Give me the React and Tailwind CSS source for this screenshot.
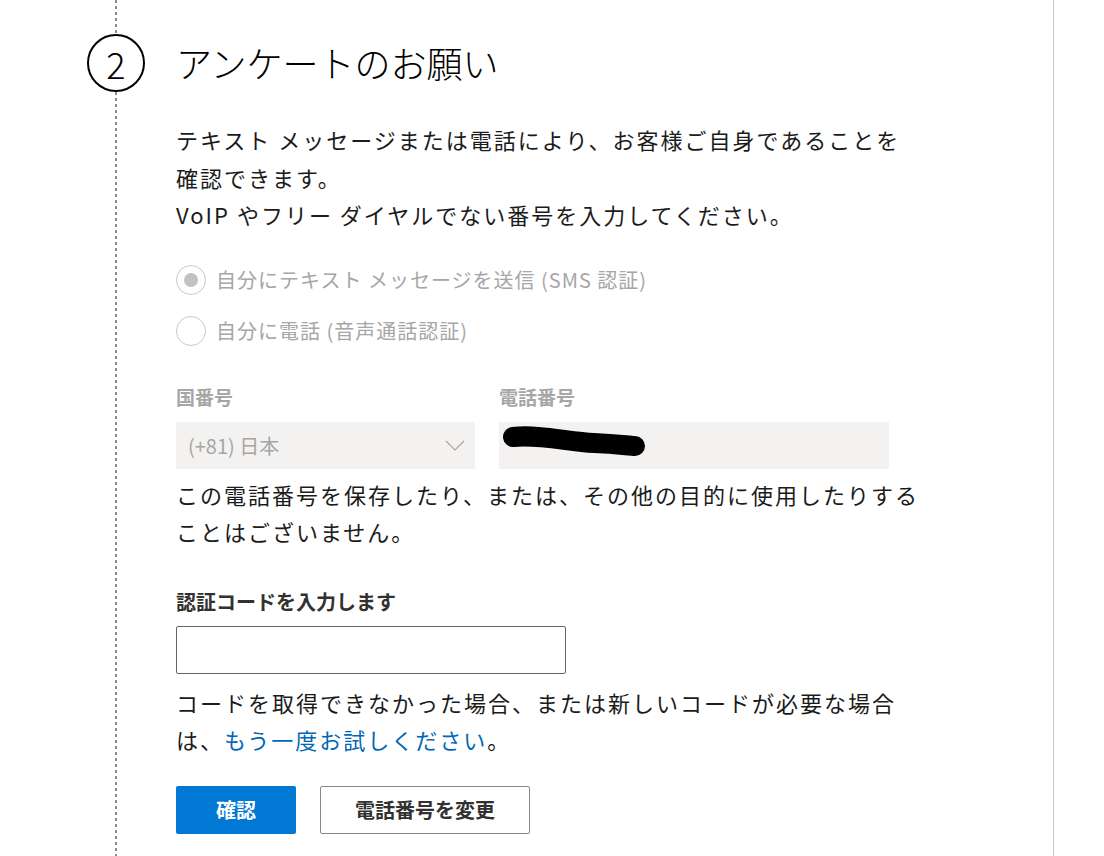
import React from 'react';

const jp = { fontFamily: '"Noto Sans CJK JP", "Noto Sans", sans-serif' };

function Radio({ checked, label }) {
  return (
    <div className="flex items-center gap-[10px] h-[34px]">
      <span className="w-[30px] h-[30px] rounded-full border border-[#c8c8c8] flex items-center justify-center">
        {checked && <span className="w-[14px] h-[14px] rounded-full bg-[#c2c2c2]" />}
      </span>
      <span className="text-[20px] text-[#a6a6a6] tracking-[1px]">{label}</span>
    </div>
  );
}

export default function App() {
  return (
    <div className="w-[1104px] h-[856px] overflow-hidden bg-white flex" style={jp}>
      <div className="w-[1054px] h-full border-r border-[#c8c8c8] flex">
        {/* ligne pointillée + numéro */}
        <div className="ml-[87px] w-[58px] flex flex-col items-center">
          <div className="w-[2px] h-[34px] bg-[repeating-linear-gradient(to_bottom,#8c8c8c_0_3px,transparent_3px_6px)]" />
          <div className="w-[58px] h-[58px] rounded-full border-2 border-black flex items-center justify-center text-[36px] font-light text-black leading-none">
            2
          </div>
          <div className="w-[2px] flex-1 bg-[repeating-linear-gradient(to_bottom,#8c8c8c_0_3px,transparent_3px_6px)]" />
        </div>

        <div className="ml-[31px] pt-[35px] text-[#1b1b1b]">
          <h1 className="text-[36px] leading-[54px] font-light text-black">アンケートのお願い</h1>

          <div className="mt-[31px] text-[22px] tracking-[2px] leading-[38px]">
            <p>テキスト メッセージまたは電話により、お客様ご自身であることを</p>
            <p>確認できます。</p>
            <p className="leading-[36px]">VoIP やフリー ダイヤルでない番号を入力してください。</p>
          </div>

          <div className="mt-[31px] flex flex-col gap-[17px]">
            <Radio checked label="自分にテキスト メッセージを送信 (SMS 認証)" />
            <Radio label="自分に電話 (音声通話認証)" />
          </div>

          <div className="mt-[35px] flex gap-[24px]">
            <div className="w-[299px]">
              <div className="text-[19px] font-bold text-[#a6a6a6] leading-[28px]">国番号</div>
              <div className="mt-[11px] h-[47px] bg-[#f3f2f1] flex items-center justify-between pl-[12px] pr-[10px]">
                <span className="text-[20px] text-[#a6a6a6]">(+81) 日本</span>
                <svg width="20" height="12" viewBox="0 0 20 12" fill="none" stroke="#a6a6a6" strokeWidth="1.2">
                  <path d="M1 1l9 9 9-9" />
                </svg>
              </div>
            </div>
            <div className="w-[390px]">
              <div className="text-[19px] font-bold text-[#a6a6a6] leading-[28px]">電話番号</div>
              <div className="mt-[11px] h-[47px] bg-[#f3f2f1] relative">
                <svg className="absolute left-0 top-0" width="160" height="47" viewBox="0 0 160 47">
                  <path d="M14 15 C 40 12, 70 20, 95 21 S 130 24, 136 24" stroke="black" strokeWidth="20" strokeLinecap="round" fill="none" />
                </svg>
              </div>
            </div>
          </div>

          <div className="mt-[7px] text-[22px] tracking-[2px] leading-[37px]">
            <p>この電話番号を保存したり、または、その他の目的に使用したりする</p>
            <p>ことはございません。</p>
          </div>

          <div className="mt-[38px] text-[20px] font-bold text-[#323130] leading-[28px]">認証コードを入力します</div>
          <div className="mt-[10px] w-[390px] h-[48px] border border-[#666] rounded-[2px]" />

          <div className="mt-[10px] text-[22px] tracking-[2px] leading-[37px]">
            <p>コードを取得できなかった場合、または新しいコードが必要な場合</p>
            <p>は、<span className="text-[#0067b8]">もう一度お試しください</span>。</p>
          </div>

          <div className="mt-[28px] flex gap-[24px]">
            <button className="w-[120px] h-[48px] bg-[#0078d4] text-white text-[20px] font-bold rounded-[2px]">確認</button>
            <button className="w-[210px] h-[48px] border border-[#8a8886] text-[#323130] text-[20px] font-bold rounded-[2px]">電話番号を変更</button>
          </div>
        </div>
      </div>
    </div>
  );
}
